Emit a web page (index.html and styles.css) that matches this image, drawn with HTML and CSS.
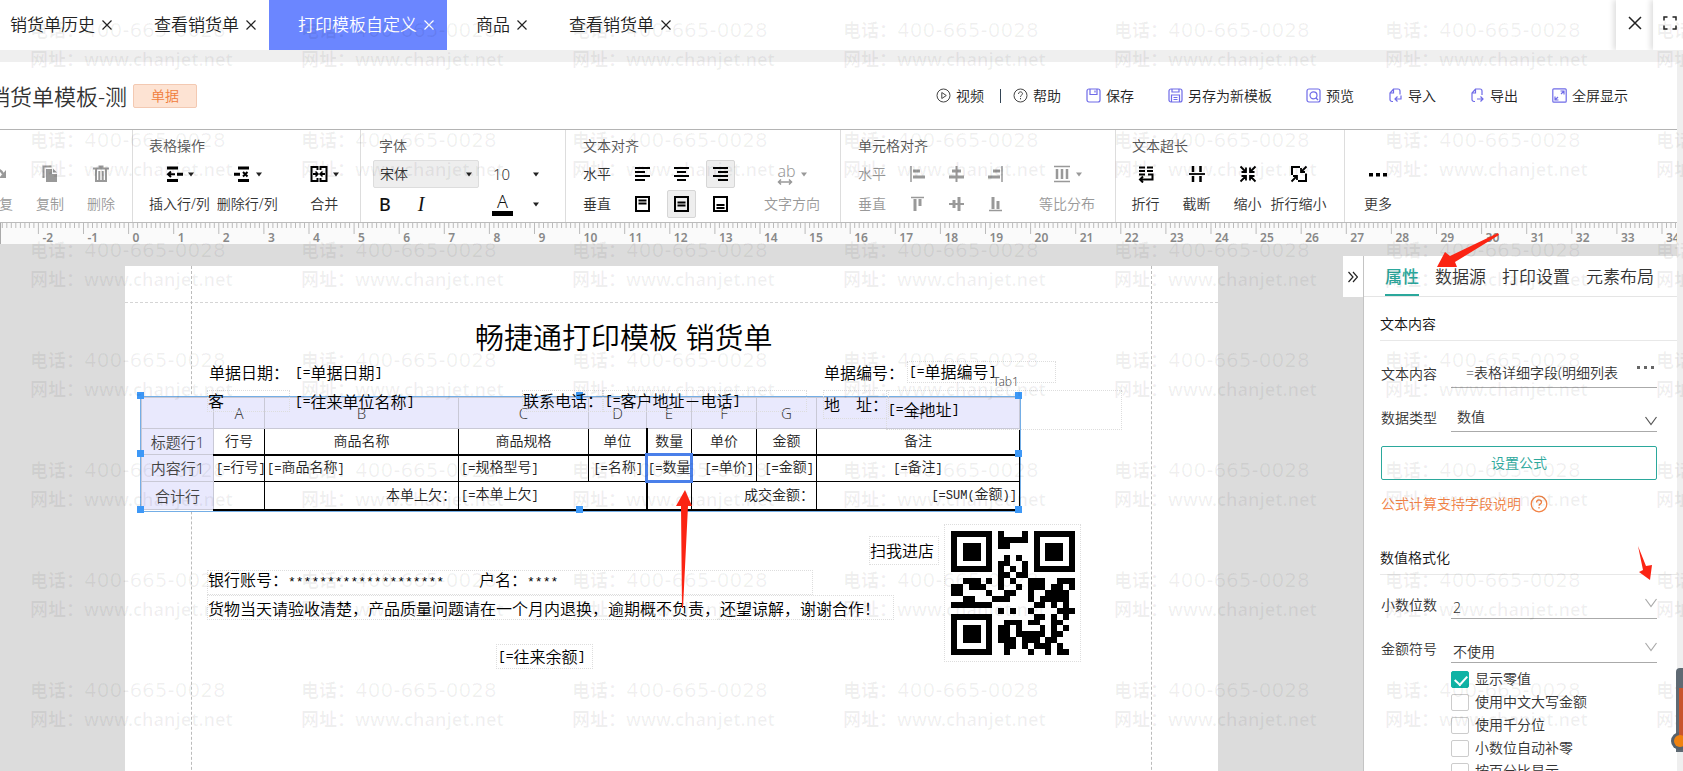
FILE: index.html
```html
<!DOCTYPE html>
<html lang="zh-CN">
<head>
<meta charset="utf-8">
<title>打印模板自定义</title>
<link rel="stylesheet" href="styles.css">
</head>
<body>
<svg class="defs" aria-hidden="true">
  <symbol id="x" viewBox="0 0 10 10"><path d="M.5.5l9 9M9.5.5l-9 9" fill="none" stroke="currentColor" stroke-width="1.2"/></symbol>
  <symbol id="caret" viewBox="0 0 6 5"><path d="M0 .5h6L3 4.5z" fill="currentColor"/></symbol>
  <symbol id="chev" viewBox="0 0 12 10"><path d="M.5 1L6 8.500 11.500 1" fill="none" stroke="currentColor" stroke-width="1.2"/></symbol>
</svg>
<div class="app">
  <div class="tabbar">
    <nav class="tabs">
      <div class="tab first"><a href="#">销货单历史</a><button aria-label="关闭"><svg><use href="#x"/></svg></button></div>
      <div class="tab"><a href="#">查看销货单</a><button aria-label="关闭"><svg><use href="#x"/></svg></button></div>
      <div class="tab active"><a href="#">打印模板自定义</a><button aria-label="关闭"><svg><use href="#x"/></svg></button></div>
      <div class="tab"><a href="#">商品</a><button aria-label="关闭"><svg><use href="#x"/></svg></button></div>
      <div class="tab"><a href="#">查看销货单</a><button aria-label="关闭"><svg><use href="#x"/></svg></button></div>
    </nav>
    <button class="win close" aria-label="关闭全部"><svg viewBox="0 0 14 14"><path d="M1 1l12 12M13 1L1 13" fill="none" stroke="#222" stroke-width="1.5"/></svg></button>
    <button class="win full" aria-label="全屏"><svg viewBox="0 0 14 14"><path d="M1 4.500V1h3.500M9.500 1H13v3.500M13 9.500V13H9.500M4.500 13H1V9.500" fill="none" stroke="#222" stroke-width="1.500"/></svg></button>
  </div>
  <div class="frame">
    <div class="content">
      <header class="header">
        <h1 class="doc-title">销货单模板-测</h1>
        <span class="badge">单据</span>
        <div class="actions">
          <button class="act"><svg viewBox="0 0 15 15" fill="none" stroke="#444"><circle cx="7.500" cy="7.500" r="6.500"/><path d="M5.800 4.500v6l4.500-3z"/></svg>视频</button>
          <span class="bar"></span>
          <button class="act"><svg viewBox="0 0 15 15" fill="none" stroke="#444"><circle cx="7.500" cy="7.500" r="6.500"/><path d="M5.500 6c0-3 4-2.600 4-.3 0 1.500-2 1.300-2 3.200M7.500 10v1.300"/></svg>帮助</button>
          <button class="act save"><svg class="v" viewBox="0 0 15 15"><rect x="1" y="1" width="13" height="13" rx="2"/><path d="M4 1v5.500h7V1M9 2.500v2"/></svg>保存</button>
          <button class="act saveas"><svg class="v" viewBox="0 0 15 15"><rect x="1" y="1" width="13" height="13" rx="2"/><path d="M4 1v3h7V1M3.500 14V7h8v7M5.500 9.500h4M5.500 11.500h4"/></svg>另存为新模板</button>
          <button class="act view"><svg class="v" viewBox="0 0 15 15"><rect x="1" y="1" width="13" height="13" rx="2"/><circle cx="7.500" cy="7.300" r="3.500"/><path d="M10 10l2 2"/></svg>预览</button>
          <button class="act in"><svg class="v" viewBox="0 0 15 15"><path d="M5 13.500H4a2 2 0 0 1-2-2V5l3.500-4H10a2 2 0 0 1 2 2v3.500M5.500 1v4H2M13 7.500V11H7.500M9.500 8.500L7 11l2.500 2.500"/></svg>导入</button>
          <button class="act in"><svg class="v" viewBox="0 0 15 15"><path d="M5 13.500H4a2 2 0 0 1-2-2V5l3.500-4H10a2 2 0 0 1 2 2v4M5.500 1v4H2M7 11h6M10.500 8.500L13 11l-2.500 2.500"/></svg>导出</button>
          <button class="act fs"><svg class="v" viewBox="0 0 15 15"><rect x=".8" y=".8" width="13.400" height="13.400" rx="1"/><path d="M8.500 3H12v3.500M12 3L9 6M3 8.500V12h3.500M3 12l3-3"/></svg>全屏显示</button>
        </div>
      </header>

      <div class="toolbar">
        <section class="group g-edit">
          <div class="tools">
            <button class="tool dim"><svg viewBox="0 0 18 18"><path d="M3 6c4-3 8-1 10 3" fill="none" stroke="#999" stroke-width="2.500"/><path d="M16 5v8H9z" fill="#999"/></svg>恢复</button>
            <button class="tool dim"><svg viewBox="0 0 18 18"><path d="M2.500 13V1.500h8" fill="none" stroke="#999" stroke-width="2"/><path d="M5 4h6v5h5v8H5zM12 3.500l4 4h-4z" fill="#999"/></svg>复制</button>
            <button class="tool dim"><svg viewBox="0 0 18 18"><path d="M1 3.500h16M6.500 1.500h5M4 4v12h10V4M7.300 6v9M10.700 6v9" fill="none" stroke="#999" stroke-width="2"/></svg>删除</button>
          </div>
        </section>
        <section class="group g-table">
          <h2>表格操作</h2>
          <div class="tools">
            <button class="tool"><span class="ico"><svg viewBox="0 0 18 18" fill="none" stroke="#000" stroke-width="3"><path d="M2 3h11M2 15.500h11M12 9.300h6"/><path d="M3 9.300h7M6 6.500L3 9.300l3 2.800" stroke-width="2"/></svg><svg class="caret"><use href="#caret"/></svg></span>插入行/列</button>
            <button class="tool"><span class="ico"><svg viewBox="0 0 18 18" fill="none" stroke="#000" stroke-width="3"><path d="M5 3h11M5 15.500h11M1 9.300h6"/><path d="M10 7l4.500 4.500M14.500 7L10 11.500" stroke-width="2"/></svg><svg class="caret"><use href="#caret"/></svg></span>删除行/列</button>
            <button class="tool merge"><span class="ico"><svg viewBox="0 0 18 18" fill="none" stroke="#000" stroke-width="2"><path d="M7.500 5V2h-6v14h6v-3M10.500 5V2h6v14h-6v-3M3 9h4M15 9h-4"/><path d="M5.500 6.500L8 9l-2.500 2.500M12.500 6.500L10 9l2.500 2.500" stroke-width="1.500"/></svg><svg class="caret"><use href="#caret"/></svg></span>合并</button>
          </div>
        </section>
        <section class="group g-font">
          <h2>字体</h2>
          <div class="line">
            <span class="drop family"><select aria-label="字体"><option>宋体</option></select><svg class="caret"><use href="#caret"/></svg></span>
            <span class="drop size"><select aria-label="字号"><option>10</option></select><svg class="caret"><use href="#caret"/></svg></span>
          </div>
          <div class="line">
            <button class="fmt" aria-label="加粗"><b>B</b></button>
            <button class="fmt it" aria-label="斜体"><i>I</i></button>
            <button class="fmt color" aria-label="文字颜色"><span>A</span></button>
            <button class="fmt more" aria-label="更多颜色"><svg class="caret"><use href="#caret"/></svg></button>
          </div>
        </section>
        <section class="group g-align">
          <h2>文本对齐</h2>
          <div class="split">
            <div>
              <div class="line icons"><span>水平</span>
                <button aria-label="左对齐"><svg viewBox="0 0 15 16"><path d="M0 2h15M0 6h10M0 10h15M0 14h10"/></svg></button>
                <button aria-label="居中"><svg viewBox="0 0 15 16"><path d="M0 2h15M3 6h9M0 10h15M3 14h9"/></svg></button>
                <button class="on" aria-label="右对齐"><svg viewBox="0 0 15 16"><path d="M0 2h15M5 6h10M0 10h15M5 14h10"/></svg></button></div>
              <div class="line icons"><span>垂直</span>
                <button aria-label="顶端"><svg viewBox="0 0 15 16"><path d="M1 1h13v14H1zM3.500 4.500h8M3.500 7.500h8"/></svg></button>
                <button class="on" aria-label="中部"><svg viewBox="0 0 15 16"><path d="M1 1h13v14H1zM3.500 6.500h8M3.500 9.500h8"/></svg></button>
                <button aria-label="底端"><svg viewBox="0 0 15 16"><path d="M1 1h13v14H1zM3.500 9h8M3.500 12h8"/></svg></button></div>
            </div>
            <button class="tool dim"><span class="ico"><span class="ab">ab<svg viewBox="0 0 16 6"><path d="M1 3h14M4 .5L1.500 3 4 5.500M12 .5L14.500 3 12 5.500" fill="none" stroke="#999" stroke-width="1.500"/></svg></span><svg class="caret"><use href="#caret"/></svg></span>文字方向</button>
          </div>
        </section>
        <section class="group g-align">
          <h2>单元格对齐</h2>
          <div class="split">
            <div class="dim">
              <div class="line icons"><span>水平</span>
                <button aria-label="左对齐"><svg viewBox="0 0 15 16"><path d="M1 0v16" stroke-width="1.500"/><path d="M3 5h7M3 11h12" stroke-width="3"/></svg></button>
                <button aria-label="居中"><svg viewBox="0 0 15 16"><path d="M7.500 0v16"/><path d="M3 5h9M0 11h15" stroke-width="3"/></svg></button>
                <button aria-label="右对齐"><svg viewBox="0 0 15 16"><path d="M14 0v16" stroke-width="1.500"/><path d="M5 5h7M0 11h12" stroke-width="3"/></svg></button></div>
              <div class="line icons"><span>垂直</span>
                <button aria-label="顶端"><svg viewBox="0 0 15 16"><path d="M1 1.500h13" stroke-width="1.500"/><path d="M5 3v12M10 3v7" stroke-width="3"/></svg></button>
                <button aria-label="中部"><svg viewBox="0 0 15 16"><path d="M0 8h15"/><path d="M5 4v8M10 1v14" stroke-width="3"/></svg></button>
                <button aria-label="底端"><svg viewBox="0 0 15 16"><path d="M1 14.500h13" stroke-width="1.500"/><path d="M5 1v12M10 5v8" stroke-width="3"/></svg></button></div>
            </div>
            <button class="tool dim"><span class="ico"><svg viewBox="0 0 18 18" fill="none" stroke="#999"><path d="M1 1.500h16M1 16.500h16" stroke-width="1.500"/><path d="M4 4v10M9 4v10M14 4v10" stroke-width="2.500"/></svg><svg class="caret"><use href="#caret"/></svg></span>等比分布</button>
          </div>
        </section>
        <section class="group g-over">
          <h2>文本超长</h2>
          <div class="grid4">
            <button class="tool"><svg viewBox="0 0 18 18" fill="none" stroke="#000" stroke-width="2"><path d="M2 2.500h6M10 2.500h6M2 6h6M10 6h6M2 9.500h6M11 9.500h4.500v5H3M6 11.500l-3 3 3 3"/></svg>折行</button>
            <button class="tool"><svg viewBox="0 0 18 18" fill="none" stroke="#000" stroke-width="2.500"><path d="M5 1v6M5 11v6M12.500 1v6M12.500 11v6"/><path d="M1 9h16" stroke-width="1.800"/></svg>截断</button>
            <button class="tool"><svg viewBox="0 0 18 18" fill="none" stroke="#000" stroke-width="1.800"><path d="M1.500 1.500L7 7M7 2.500V7H2.500M16.500 1.500L11 7M11 2.500V7h4.500M1.500 16.500L7 11M7 15.500V11H2.500M16.500 16.500L11 11M11 15.500V11h4.500"/></svg>缩小</button>
            <button class="tool"><svg viewBox="0 0 18 18" fill="none" stroke="#000" stroke-width="2"><path d="M2 10V2h8M16 8.500V16H8"/><path d="M16.500 1.500L11 7M11 3v4h4M1.500 16.500L7 11M7 15v-4H3" stroke-width="1.800"/></svg>折行缩小</button>
          </div>
        </section>
        <section class="group g-more">
          <h2>&nbsp;</h2>
          <button class="tool"><svg viewBox="0 0 18 18"><path d="M0 8h4v3.500H0zM7 8h4v3.500H7zM14 8h4v3.500h-4z"/></svg>更多</button>
        </section>
      </div>

      <div class="ruler"></div>

      <main class="workspace">
        <div class="canvas">
          <div class="paper">
            <i class="guide top"></i><i class="guide left"></i><i class="guide right"></i>
            <div class="selection">
              <table>
                <colgroup><col class="c0"><col class="c1"><col class="c2"><col class="c3"><col class="c4"><col class="c5"><col class="c6"><col class="c7"><col></colgroup>
                <tr class="letters"><th></th><th>A</th><th>B</th><th>C</th><th>D</th><th>E</th><th>F</th><th>G</th><th>H</th></tr>
                <tr class="r1"><th>标题行1</th><td>行号</td><td>商品名称</td><td>商品规格</td><td class="thick">单位</td><td>数量</td><td>单价</td><td>金额</td><td>备注</td></tr>
                <tr class="r2"><th>内容行1</th><td><code>[=</code>行号<code>]</code></td><td class="l"><code>[=</code>商品名称<code>]</code></td><td class="l"><code>[=</code>规格型号<code>]</code></td><td class="r thick"><code>[=</code>名称<code>]</code></td><td class="picked"><code>[=</code>数量</td><td class="r"><code>[=</code>单价<code>]</code></td><td class="r"><code>[=</code>金额<code>]</code></td><td><code>[=</code>备注<code>]</code></td></tr>
                <tr class="r3"><th>合计行</th><td></td><td class="r">本单上欠：</td><td class="l thick" colspan="2"><code>[=</code>本单上欠<code>]</code></td><td></td><td class="r" colspan="2">成交金额：</td><td class="r"><code>[=SUM(</code>金额<code>)]</code></td></tr>
              </table>
              <i class="h nw"></i><i class="h n"></i><i class="h ne"></i><i class="h w"></i><i class="h e"></i><i class="h sw"></i><i class="h s"></i><i class="h se"></i>
            </div>
            <div class="el title">畅捷通打印模板 销货单</div>
            <div class="el date-l">单据日期：</div>
            <div class="el date-v"><code>[=</code>单据日期<code>]</code></div>
            <div class="el cust-l box">客</div>
            <div class="el cust-v"><code>[=</code>往来单位名称<code>]</code></div>
            <div class="el tel-l box">联系电话：</div>
            <div class="el tel-v box"><code>[=</code>客户地址－电话<code>]</code></div>
            <div class="el no-l">单据编号：</div>
            <div class="el no-v box"><code>[=</code>单据编号<code>]</code></div>
            <div class="el tabname">Tab1</div>
            <div class="el addr-l box">地　址：</div>
            <div class="el addr-v box"><code>[=</code>全地址<code>]</code></div>
            <div class="el bank box"><span>银行账号：<code>********************</code></span><span>户名：<code>****</code></span></div>
            <div class="el notice box">货物当天请验收清楚，产品质量问题请在一个月内退换，逾期概不负责，还望谅解，谢谢合作！</div>
            <div class="el scan box">扫我进店</div>
            <div class="el qr box"><svg viewBox="0 0 21 21" role="img" aria-label="二维码"></svg></div>
            <div class="el balance box"><code>[=</code>往来余额<code>]</code></div>
          </div>
        </div>
        <button class="collapse" aria-label="收起"><svg viewBox="0 0 10 12"><path d="M.5 1L5 6 .5 11M5 1l4.500 5L5 11" fill="none" stroke="#222" stroke-width="1.200"/></svg></button>
        <aside class="panel">
          <nav class="ptabs"><a class="on" href="#">属性</a><a href="#">数据源</a><a href="#">打印设置</a><a href="#">元素布局</a></nav>
          <h3>文本内容</h3>
          <div class="field f1"><label for="t">文本内容</label><span class="ctl"><input id="t" value="=表格详细字段(明细列表"><button aria-label="更多"><svg viewBox="0 0 17 4"><path d="M0 0h3v3H0zM7 0h3v3H7zM14 0h3v3h-3z" fill="#666"/></svg></button></span></div>
          <div class="field f2"><label for="k">数据类型</label><span class="ctl"><select id="k"><option>数值</option></select><svg class="chev"><use href="#chev"/></svg></span></div>
          <button class="formula">设置公式</button>
          <a class="help" href="#">公式计算支持字段说明<svg viewBox="0 0 18 18" fill="none" stroke="currentColor" stroke-width="1.300"><circle cx="9" cy="9" r="7.800"/><path d="M6.500 7.500c0-3.600 5-3.200 5-.3 0 1.800-2.500 1.500-2.500 3.600M9 12v1.600"/></svg></a>
          <h3 class="second">数值格式化</h3>
          <div class="field f3"><label for="d">小数位数</label><span class="ctl low"><select id="d"><option>2</option></select><svg class="chev"><use href="#chev"/></svg></span></div>
          <div class="field f4"><label for="m">金额符号</label><span class="ctl low"><select id="m"><option>不使用</option></select><svg class="chev"><use href="#chev"/></svg></span></div>
          <div class="checks">
            <label><input type="checkbox" checked>显示零值</label>
            <label><input type="checkbox">使用中文大写金额</label>
            <label><input type="checkbox">使用千分位</label>
            <label><input type="checkbox">小数位自动补零</label>
            <label><input type="checkbox">按百分比显示</label>
          </div>
        </aside>
      </main>
    </div>
    <div class="gutter"></div>
  </div>
  <div class="watermark" aria-hidden="true"></div>
  <svg class="arrow a1" viewBox="0 0 62 36"><path d="M0 34L8 19l5 4L61 0l1 2-44 27 2 5z"/></svg>
  <svg class="arrow a2" viewBox="0 0 16 34"><path d="M1 0L9 20l6-1-2 15L2 26l4-2z"/></svg>
  <svg class="arrow a3" viewBox="0 0 16 118"><path d="M9 0l7 16h-4L7 118H6L5 16H0z"/></svg>
  <svg class="thermo" viewBox="0 0 14 84"><path d="M5 84V4a4 4 0 0 1 4-4h5v84z" fill="#5f6a73"/><circle cx="9" cy="73" r="9" fill="#56616b"/><path d="M8 20h4v50H8z" fill="#c8552d"/><circle cx="9" cy="73" r="6" fill="#f0820f"/></svg>
</div>
<script src="script.js"></script>
</body>
</html>
```

FILE: styles.css
```css
* { box-sizing: border-box; }
body { margin: 0; font-family: "Noto Sans", "Noto Sans CJK SC", sans-serif; font-size: 14px; font-weight: 350; line-height: 20px; color: #333; background: #fff; }
button, input, select { font: inherit; color: inherit; border: 0; background: none; padding: 0; margin: 0; }
select, input { appearance: none; outline: 0; }
a { color: inherit; text-decoration: none; }
svg { display: block; flex: none; }
h1, h2, h3 { margin: 0; font-weight: 350; }
.defs { position: absolute; width: 0; height: 0; }

.app { position: relative; height: 100vh; overflow: hidden; display: flex; flex-direction: column; }

/* Window tabs */
.tabbar { height: 50px; display: flex; flex: none; }
.tabs { flex: 1; display: flex; }
.tab { display: flex; align-items: center; gap: 7px; padding: 0 13px 0 29px; font-size: 17px; white-space: nowrap; color: #222; }
.tab.first { padding-left: 10px; }
.tab svg { width: 10px; height: 10px; }
.tab.active { background: #6b86ff; color: #fff; }
.win { display: flex; align-items: center; box-shadow: -3px 0 5px #e2e2e2; padding-bottom: 4px; }
.win svg { width: 14px; height: 14px; }
.win.close { width: 37px; padding-left: 12px; }
.win.full { width: 30px; padding-left: 10px; }

.frame { flex: 1; display: flex; min-height: 0; }
.content { flex: 1; min-width: 0; display: flex; flex-direction: column; border-top: 12px solid #efefef; }
.gutter { width: 6px; background: #efefef; }

/* Document header */
.header { height: 68px; flex: none; display: flex; align-items: center; border-bottom: 1px solid #b4b4b4; overflow: hidden; }
.doc-title { font-size: 22px; line-height: 30px; margin-left: -12px; white-space: nowrap; }
.badge { margin-left: 6px; width: 64px; height: 24px; border: 1px solid #f3c9b2; border-radius: 2px; background: #fde3d3; color: #f07d3c; text-align: center; line-height: 22px; }
.actions { margin-left: auto; margin-right: 49px; display: flex; align-items: center; color: #222; }
.act { display: flex; align-items: center; gap: 5px; white-space: nowrap; }
.act svg { width: 15px; height: 15px; }
.act .v { fill: none; stroke: #6f6be8; stroke-width: 1.2; }
.bar { width: 1px; height: 14px; background: #345; margin: 0 12px 0 16px; }
.save { margin-left: 25px; }
.saveas, .view { margin-left: 34px; }
.in, .fs { margin-left: 34px; }

/* Toolbar */
.toolbar { height: 93px; flex: none; display: flex; border-bottom: 1px solid #bbb; white-space: nowrap; }
.group { border-right: 1px solid #ddd; padding-top: 7px; }
.group h2 { font-size: 14px; line-height: 18px; margin-bottom: 4px; color: #555; }
.tools { display: flex; }
.tool { display: flex; flex-direction: column; align-items: center; line-height: 30px; color: #333; }
.tool > svg, .tool > .ico { height: 30px; }
.tool > svg { width: 18px; padding: 6px 0; }
.ico { display: flex; align-items: center; gap: 5px; }
.ico svg { width: 18px; height: 18px; }
.caret, .ico .caret { width: 6px; height: 5px; color: #222; }
.dim, .dim .ico .caret, .dim .line, .tool.dim { color: #999; }
.g-edit { width: 133px; padding-top: 29px; overflow: hidden; }
.g-edit .tools { gap: 23px; margin-left: -15px; }
.g-table { width: 228px; padding-left: 16px; }
.g-table .tools { gap: 7px; }
.g-table .merge { margin-left: 25px; }
.g-font { width: 205px; padding-left: 12px; }
.g-font h2 { padding-left: 6px; }
.line { display: flex; align-items: center; height: 30px; }
.drop { position: relative; display: flex; align-items: center; height: 28px; }
.drop select { width: 100%; padding-left: 6px; }
.drop .caret { position: absolute; right: 6px; }
.family { width: 106px; background: #eee; border: 1px solid #ddd; border-radius: 2px; }
.size { width: 58px; margin-left: 8px; }
.size select { font-size: 15px; }
.fmt { width: 24px; font-size: 18px; line-height: 24px; color: #111; }
.fmt b { font-weight: 500; }
.it { margin-left: 12px; font-family: "Liberation Serif", serif; font-size: 20px; }
.color { margin-left: 59px; width: 21px; }
.color span { display: block; line-height: 19px; border-bottom: 5px solid #000; }
.more { display: flex; justify-content: center; margin-left: 11px; }
.g-align { width: 275px; padding-left: 17px; }
.split { display: flex; gap: 29px; }
.icons { gap: 10px; }
.icons span { margin-right: 7px; }
.icons button { width: 29px; height: 28px; padding: 0 6px; border: 1px solid transparent; border-radius: 2px; }
.icons .on { background: #eee; border-color: #d6d6d6; }
.icons svg { width: 15px; height: 16px; fill: none; stroke: #000; stroke-width: 2; }
.dim .icons svg { stroke: #999; }
.ab { font-size: 16px; line-height: 16px; }
.ico .ab svg { width: 16px; height: 6px; }
.g-over { width: 229px; padding-left: 4px; }
.g-over h2 { padding-left: 12px; }
.grid4 { display: grid; grid-template-columns: repeat(4, 51px); }
.g-more { border: 0; padding-left: 19px; }

.ruler { height: 21px; flex: none; background: #fafafa; overflow: hidden; border-left: 1px solid #aaa; }
.ruler text { font-size: 12px; font-weight: 600; fill: #888; }

/* Workspace */
.workspace { flex: 1; min-height: 0; display: flex; align-items: flex-start; background: #dcdcdc; overflow: hidden; }
.canvas { flex: 1; padding: 22px 125px 0; align-self: stretch; }
.paper { position: relative; height: 1200px; background: #fff; color: #000; font-size: 16px; }
.guide { position: absolute; }
.guide.top { left: 0; right: 0; top: 36px; border-top: 1px dashed #d5d5d5; }
.guide.left, .guide.right { top: 0; bottom: 0; border-left: 1px dashed #bbb; }
.guide.left { left: 66px; }
.guide.right { right: 66px; }
code { font-family: "Liberation Mono", monospace; font-size: 13px; }
.el { position: absolute; display: flex; align-items: center; height: 22px; white-space: nowrap; line-height: 20px; }
.box { border: 1px dotted #ddd; }
.title { left: 350px; top: 52px; height: 40px; font-size: 29px; line-height: 40px; }
.date-l { left: 84px; top: 96px; }
.date-v { left: 170px; top: 96px; }
.cust-l { left: 82px; top: 124px; width: 83px; }
.cust-v { left: 170px; top: 125px; }
.tel-l { left: 397px; top: 124px; width: 81px; }
.tel-v { left: 478px; top: 124px; width: 204px; padding-left: 1px; }
.no-l { left: 699px; top: 96px; }
.no-v { left: 782px; top: 95px; width: 149px; padding-left: 1px; }
.tabname { left: 868px; top: 105px; font-size: 12px; color: #555; }
.addr-l { left: 698px; top: 124px; width: 66px; height: 29px; }
.addr-v { left: 761px; top: 124px; width: 236px; height: 40px; padding-left: 1px; }
.bank { left: 82px; top: 304px; width: 606px; height: 25px; align-items: flex-start; gap: 35px; line-height: 18px; }
.notice { left: 82px; top: 329px; width: 687px; height: 25px; align-items: flex-end; }
.scan { left: 744px; top: 270px; width: 70px; height: 29px; }
.qr { left: 819px; top: 258px; width: 137px; height: 138px; justify-content: center; }
.qr svg { width: 124px; height: 124px; }
.balance { left: 371px; top: 378px; width: 97px; height: 25px; padding-left: 1px; }

.selection { position: absolute; left: 15px; top: 130px; width: 881px; border: 1px solid #74aee6; font-size: 14px; color: #222; }
table { width: 100%; table-layout: fixed; border-collapse: collapse; line-height: 16px; }
th, td { padding: 0 2px; white-space: nowrap; font-weight: 350; text-align: center; }
td { border: 1px solid #000; }
th { background: #e9e9fd; border: 1px solid #c9c9d6; font-size: 15px; color: #444; }
.letters { height: 31px; }
.r1 { height: 26px; }
.r2 { height: 27px; }
.r3 { height: 28px; }
.r1 td, .r3 td { border-bottom-width: 2px; }
td.thick { border-right-width: 2px; }
td.picked { border: 3px solid #4a80ea; padding: 0; }
td code { font-size: 12px; }
td.l { text-align: left; }
td.r { text-align: right; }
.c0 { width: 72px; }
.c1 { width: 51px; }
.c2 { width: 194px; }
.c3 { width: 130px; }
.c4 { width: 58px; }
.c5 { width: 45px; }
.c6 { width: 65px; }
.c7 { width: 60px; }
.h { position: absolute; width: 7px; height: 7px; background: #3d98f7; }
.nw, .w, .sw { left: -4px; }
.n, .s { left: 435px; }
.ne, .e, .se { right: -2px; }
.nw, .n, .ne { top: -5px; }
.w, .e { top: 53px; }
.sw, .s, .se { bottom: -2px; }

.collapse { width: 20px; height: 41px; margin-top: 12px; padding-left: 5px; background: #fff; }
.collapse svg { width: 10px; height: 12px; }

/* Property panel */
.panel { width: 314px; flex: none; margin-top: 12px; min-height: 100%; background: #fff; border-left: 1px solid #c4c4c4; padding: 0 20px 0 17px; }
.ptabs { display: flex; gap: 16px; margin: 0 -20px 0 -17px; padding: 0 0 0 21px; height: 41px; border-bottom: 1px solid #e5e5e5; font-size: 17px; line-height: 41px; white-space: nowrap; }
.ptabs .on { color: #2ba89c; font-weight: 500; border-bottom: 2px solid #2ba89c; }
.panel h3 { font-size: 14px; color: #111; margin: 0 -20px 0 -1px; padding: 17px 0 6px; border-bottom: 1px solid #e8e8e8; }
.field { display: flex; align-items: flex-end; justify-content: space-between; }
.field label { line-height: 20px; color: #333; }
.ctl { position: relative; display: flex; width: 206px; height: 30px; border-bottom: 1px solid #aaa; }
.ctl input { width: 160px; margin-left: 15px; }
.ctl button { margin: 7px 0 0 11px; width: 18px; height: 6px; }
.ctl button svg { width: 17px; height: 4px; }
.ctl select { width: 100%; padding: 0 0 0 6px; }
.low select { padding: 9px 0 0 2px; }
.chev { position: absolute; right: 0; top: 14px; width: 12px; height: 10px; color: #555; }
.low .chev { top: 9px; color: #aaa; }
.f1 { margin-top: 17px; }
.f2 { margin-top: 14px; }
.f3 { margin-top: 14px; }
.f4 { margin-top: 14px; }
.field label { margin-bottom: 4px; }
.formula { display: block; width: 100%; height: 34px; margin-top: 14px; border: 1px solid #2ba89c; border-radius: 2px; color: #2ba89c; }
.help { display: flex; align-items: center; gap: 9px; margin-top: 14px; color: #f28244; }
.help svg { width: 18px; height: 18px; }
.panel .second { padding-top: 34px; }
.checks { margin: 6px 0 0 70px; display: grid; gap: 3px; }
.checks label { display: flex; align-items: center; gap: 6px; line-height: 20px; height: 20px; white-space: nowrap; }
.checks input { width: 18px; height: 17px; border: 1px solid #ccc; border-radius: 2px; position: relative; }
.checks input:checked { background: #0fb3a5; border-color: #0fb3a5; }
.checks input:checked::after { content: ""; position: absolute; left: 5px; top: 1px; width: 6px; height: 10px; border: solid #fff; border-width: 0 2px 2px 0; transform: rotate(42deg); }

/* Layers above the page */
.watermark { position: absolute; left: 30px; top: 16px; display: grid; grid-template-columns: repeat(7, 271px); pointer-events: none; color: rgba(0, 0, 0, 0.06); font-size: 18px; font-weight: 600; line-height: 29px; white-space: nowrap; }
.watermark p { margin: 0 0 52px; }
.watermark span { display: flex; align-items: center; height: 29px; }
.watermark b { font-family: "DejaVu Sans", sans-serif; font-size: 20px; font-weight: 400; }
.arrow { position: absolute; fill: #fb2413; pointer-events: none; }
.a1 { left: 1437px; top: 233px; width: 62px; height: 36px; }
.a2 { left: 1637px; top: 546px; width: 16px; height: 34px; }
.a3 { left: 676px; top: 490px; width: 16px; height: 118px; }
.thermo { position: absolute; right: -2px; top: 668px; width: 14px; height: 84px; }
```

FILE: script.js
```js
const NS = "http://www.w3.org/2000/svg";

// Ruler: one centimetre per 45.1px, zero at 127.6px.
const cm = 45.1, zero = 127.6;
let ticks = "", labels = "";
for (let i = -28; i <= 345; i++) {
  const x = (zero + i * cm / 10).toFixed(1);
  const major = i % 10 === 0;
  ticks += `M${x} 0v${major ? 11 : 5}`;
  if (major) labels += `<text x="${+x + 4}" y="19">${i / 10}</text>`;
}
const ruler = document.createElementNS(NS, "svg");
ruler.setAttribute("width", "1676");
ruler.setAttribute("height", "21");
ruler.innerHTML = `<path d="${ticks}" stroke="#bbb" fill="none"/>${labels}`;
document.querySelector(".ruler").append(ruler);

// QR code modules, one string per row.
const rows = [
  "#######.#...#.#######",
  "#.....#.#####.#.....#",
  "#.###.#.##....#.###.#",
  "#.###.#.......#.###.#",
  "#.###.#..#.#..#.###.#",
  "#.....#.##..#.#.....#",
  "#######.#.#.#.#######",
  "........##.##........",
  "..###.#.#.#..###..###",
  "##.###..#..#.###.##.#",
  "##....#..##..#..####.",
  "..##...###...#.#####.",
  "#######.......##.#.#.",
  "........#.#..#....###",
  "#######.......##.#.#.",
  "#.....#..###.##..##..",
  "#.###.#.##.#...#.#.#.",
  "#.###.#.##.#####.##..",
  "#.###.#.###.###.##...",
  "#.....#..##.#.###.#..",
  "#######..#...#..#.##."
];
let d = "";
rows.forEach((r, y) => [...r].forEach((c, x) => { if (c === "#") d += `M${x} ${y}h1v1h-1z`; }));
document.querySelector(".qr svg").innerHTML = `<path d="${d}" shape-rendering="crispEdges"/>`;

document.querySelector(".watermark").innerHTML =
  "<p><span>电话：<b>400-665-0028</b></span><span>网址：www.chanjet.net</span></p>".repeat(49);
```
